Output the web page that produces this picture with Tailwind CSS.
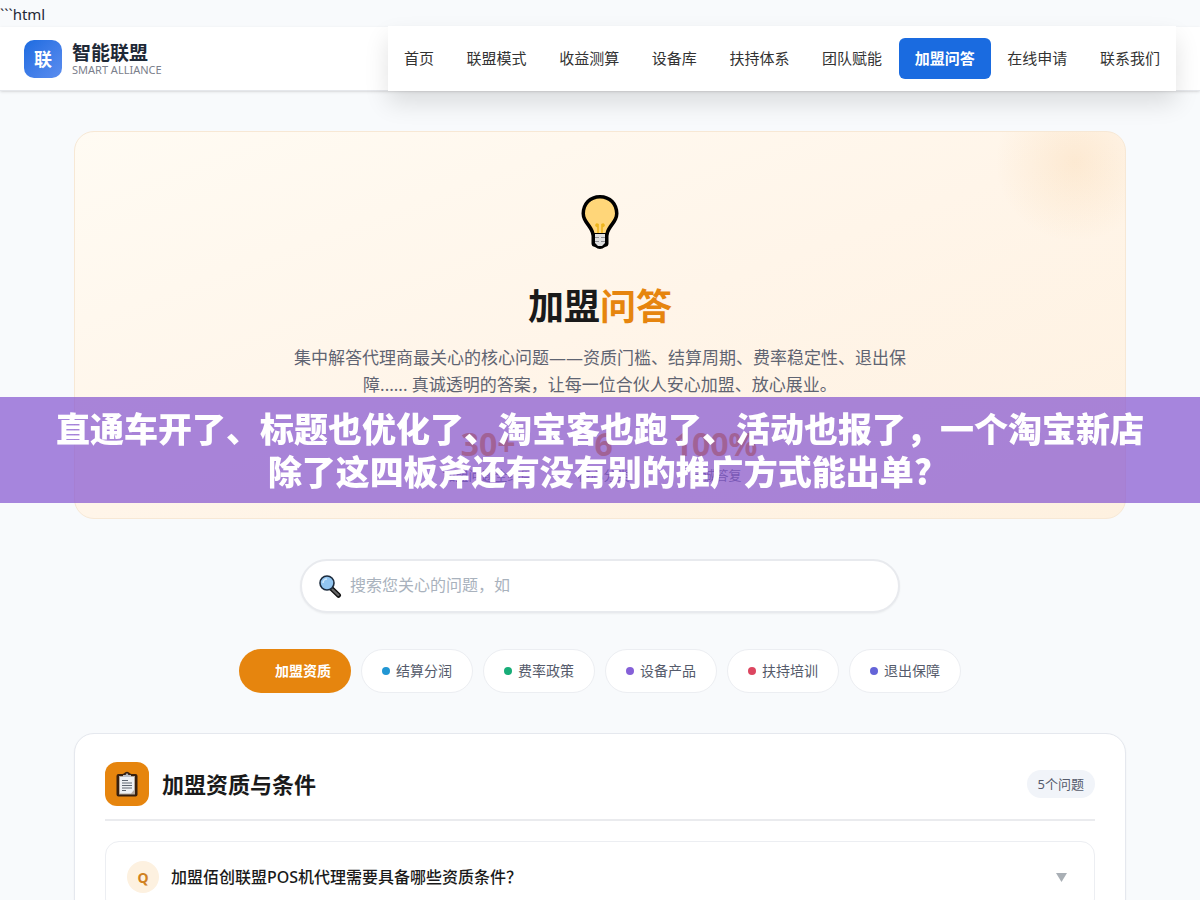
<!DOCTYPE html>
<html lang="zh-CN">
<head>
<meta charset="utf-8">
<meta name="viewport" content="width=device-width, initial-scale=1">
<title>加盟问答 - 智能联盟</title>
<script src="https://cdn.jsdelivr.net/npm/@tailwindcss/browser@4"></script>
</head>
<body class="bg-[#f8fafc] text-[#1f2937] font-['Noto_Sans','Noto_Sans_CJK_SC',sans-serif]">
<div class="h-[27px] pt-px text-[15px] leading-[27px]">```html</div>

<header class="flex h-16 items-center justify-between border-b border-[#e5e7eb] bg-white px-6 shadow-sm">
  <a href="#" class="flex items-center gap-[10px]">
    <span class="flex size-[38px] items-center justify-center rounded-[10px] bg-linear-135 from-[#1a6be0] to-[#5b8def] text-lg font-bold text-white">联</span>
    <span class="flex flex-col">
      <span class="text-[19px] leading-[23px] font-bold">智能联盟</span>
      <span class="text-[11px] leading-[10px] text-[#7b808c]">SMART ALLIANCE</span>
    </span>
  </a>
  <nav class="flex h-[65px] w-[788px] items-center justify-between bg-white text-[15px] leading-[25px] text-[#333] shadow-[0_12px_24px_rgba(0,0,0,0.12)]">
    <a href="#" class="px-4 py-2">首页</a>
    <a href="#" class="px-4 py-2">联盟模式</a>
    <a href="#" class="px-4 py-2">收益测算</a>
    <a href="#" class="px-4 py-2">设备库</a>
    <a href="#" class="px-4 py-2">扶持体系</a>
    <a href="#" class="px-4 py-2">团队赋能</a>
    <a href="#" class="rounded-md bg-[#1a6be0] px-4 py-2 font-bold text-white">加盟问答</a>
    <a href="#" class="px-4 py-2">在线申请</a>
    <a href="#" class="px-4 py-2">联系我们</a>
  </nav>
</header>

<main class="mx-auto max-w-[1100px] px-6 pt-10 pb-10">
  <section class="relative flex h-[388px] flex-col items-center overflow-hidden rounded-[20px] border border-[#f7e8d5] bg-linear-160 from-[#fffbf3] via-[#fff5e9] to-[#fef1e0] pt-[60px] text-center">
    <div class="absolute -top-[70px] -right-[50px] size-[200px] bg-[radial-gradient(circle_closest-side,rgba(232,133,12,0.1),transparent_80%)]"></div>
    <svg class="size-[60px]" viewBox="0 0 60 60" aria-hidden="true">
      <path d="M30 3C19 3 11.500 11 11.500 21.500C11.500 31 20.500 35 21.500 44V51.500Q21.500 54.500 25 55Q30 59 35 55Q38.500 54.500 38.500 51.500V44C39.500 35 48.500 31 48.500 21.500C48.500 11 41 3 30 3Z" fill="#000"/>
      <path d="M30 6.500C21 6.500 15 13 15 21.500C15 29 23 33 24.500 41H35.500C37 33 45 29 45 21.500C45 13 39 6.500 30 6.500Z" fill="#ffd679"/>
      <path d="M28 41V35L26 33.500Q26 31.500 28 32.500V35M32 41V35L34 33.500Q34 31.500 32 32.500V35" fill="none" stroke="#eeb51c" stroke-width="1.600"/>
      <path d="M25 42H35V51L32 54H28L25 51Z" fill="#dedede"/>
      <path d="M25 45.500H29M31 45.500H35M25 49.500H29M31 49.500H35" stroke="#8e8e93" stroke-width="1.200"/>
    </svg>
    <h1 class="mt-[28px] text-[36px] leading-[54px] font-bold text-[#1a1a1a]">加盟<span class="text-[#e6850e]">问答</span></h1>
    <p class="mt-[10px] max-w-[620px] text-[17px] leading-[27px] text-[#5f6472]">集中解答代理商最关心的核心问题——资质门槛、结算周期、费率稳定性、退出保障...... 真诚透明的答案，让每一位合伙人安心加盟、放心展业。</p>
    <div class="mt-[26px] flex gap-11">
      <div><div class="text-[32px] leading-[40px] font-bold text-[#e6850e]">30+</div><div class="text-[13px] leading-[22px] text-[#5f6472]">加盟问题全维度</div></div>
      <div><div class="text-[32px] leading-[40px] font-bold text-[#e6850e]">6</div><div class="text-[13px] leading-[22px] text-[#5f6472]">核心分类</div></div>
      <div><div class="text-[32px] leading-[40px] font-bold text-[#e6850e]">100%</div><div class="text-[13px] leading-[22px] text-[#5f6472]">真诚答复</div></div>
    </div>
  </section>

  <label class="mx-auto mt-10 flex h-[54px] max-w-[600px] items-center gap-2 rounded-full border-2 border-[#e8eaee] bg-white px-4 shadow-xs">
    <svg class="size-6 shrink-0" viewBox="0 0 24 24" aria-hidden="true">
      <path d="M13.500 14.500L20.500 21.300" stroke="#111" stroke-width="5" stroke-linecap="round"/>
      <path d="M14.500 15.500L20.300 21" stroke="#666" stroke-width="2.400" stroke-linecap="round"/>
      <circle cx="9" cy="9" r="7" fill="#92c5f0" stroke="#1c2b3d" stroke-width="1.600"/>
      <path d="M5 9A4 4 0 0 1 9 5" fill="none" stroke="#d3eafc" stroke-width="1.500"/>
    </svg>
    <input type="text" aria-label="搜索问题" placeholder="搜索您关心的问题，如" class="h-full flex-1 bg-transparent pb-[3px] text-base outline-none placeholder:text-[#a9b2bd]">
  </label>

  <div class="mt-9 flex flex-wrap justify-center gap-[10px] text-[14px] leading-6 text-[#555b6b]">
    <button class="flex h-11 w-28 items-center justify-end rounded-full bg-[#e6850e] pr-5 font-bold text-white">加盟资质</button>
    <button class="flex h-11 w-28 items-center justify-center gap-[6px] rounded-full border border-[#eceef2] bg-white"><span class="size-2 rounded-full bg-[#2196d3]"></span>结算分润</button>
    <button class="flex h-11 w-28 items-center justify-center gap-[6px] rounded-full border border-[#eceef2] bg-white"><span class="size-2 rounded-full bg-[#18ad78]"></span>费率政策</button>
    <button class="flex h-11 w-28 items-center justify-center gap-[6px] rounded-full border border-[#eceef2] bg-white"><span class="size-2 rounded-full bg-[#8560d8]"></span>设备产品</button>
    <button class="flex h-11 w-28 items-center justify-center gap-[6px] rounded-full border border-[#eceef2] bg-white"><span class="size-2 rounded-full bg-[#dc4660]"></span>扶持培训</button>
    <button class="flex h-11 w-28 items-center justify-center gap-[6px] rounded-full border border-[#eceef2] bg-white"><span class="size-2 rounded-full bg-[#6464d8]"></span>退出保障</button>
  </div>

  <section class="mt-10 rounded-[20px] border border-[#e5e8ee] bg-white px-[30px] pt-7 pb-8 shadow-xs">
    <div class="flex items-center gap-[13px] border-b-2 border-[#eaebee] pb-[13px]">
      <span class="flex size-11 items-center justify-center rounded-xl bg-[#e6850e]">
        <svg class="size-7" viewBox="0 0 28 28" aria-hidden="true">
          <path d="M5.500 4H9.500Q11 3.500 12 2.500Q14 1 16 2.500Q17 3.500 18.500 4H22.500Q24.500 4 24.500 6V24.500Q24.500 26.500 22.500 26.500H5.500Q3.500 26.500 3.500 24.500V6Q3.500 4 5.500 4Z" fill="#37200f"/>
          <path d="M6 6H22V24.500H6Z" fill="#b5aaa0"/>
          <path d="M7 7H21V20L18 23.500H7Z" fill="#eef1f4"/>
          <path d="M10 7V5H12.500L14 3L15.500 5H18V7Z" fill="#b9bec5"/>
          <path d="M9 10.500H15M9 13H19M9 15.500H19M9 18H19M9 20.500H13" stroke="#5e6670"/>
        </svg>
      </span>
      <h2 class="text-[22px] leading-[37px] font-bold text-[#1a1a1a]">加盟资质与条件</h2>
      <span class="ml-auto rounded-full bg-[#f1f4f9] px-[11px] py-[3px] text-[13px] leading-[22px] text-[#555b6b]">5个问题</span>
    </div>
    <button class="mt-5 flex h-[72px] w-full items-center gap-3 rounded-[14px] border border-[#eceef2] bg-white pr-[27px] pl-[21px] text-left">
      <span class="flex size-8 shrink-0 items-center justify-center rounded-full bg-[#fdf1e0] text-[14px] font-bold text-[#d08122]">Q</span>
      <span class="flex-1 text-base font-medium text-[#1a1a1a]">加盟佰创联盟POS机代理需要具备哪些资质条件？</span>
      <svg class="h-[9px] w-[11px]" viewBox="0 0 11 9" aria-hidden="true"><path d="M0 0H11L5.500 9Z" fill="#a9afb5"/></svg>
    </button>
  </section>
</main>

<div class="fixed inset-x-0 top-1/2 -translate-y-1/2 bg-[#8352d0]/70 px-10 pt-[9px] pb-[11px] text-center font-['Noto_Sans_CJK_SC',sans-serif] text-[34px] leading-[43px] font-black text-white">直通车开了、标题也优化了、淘宝客也跑了、活动也报了，一个淘宝新店除了这四板斧还有没有别的推广方式能出单?</div>
</body>
</html>
